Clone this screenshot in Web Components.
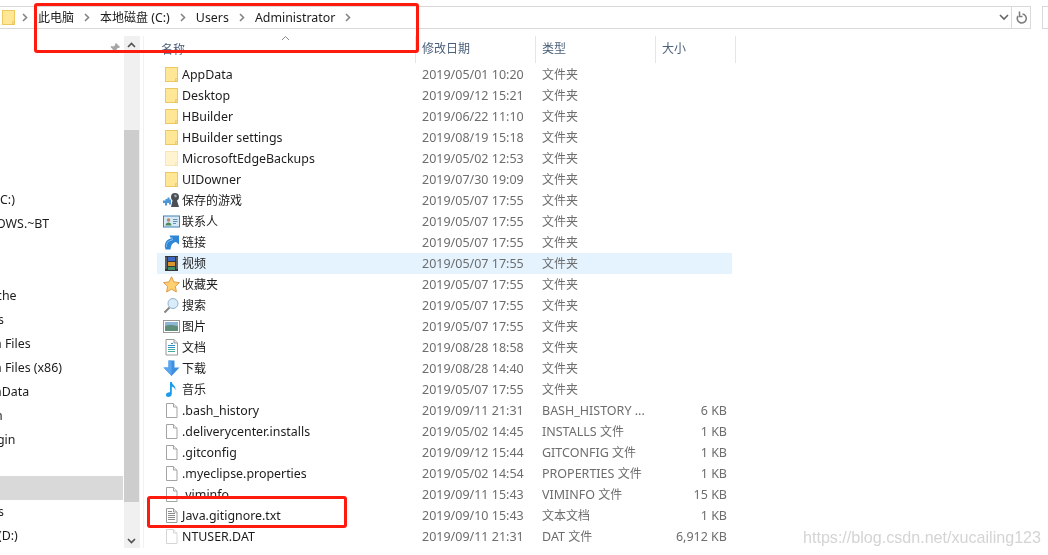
<!DOCTYPE html>
<html>
<head>
<meta charset="utf-8">
<title>Administrator</title>
<style>
  html, body { margin: 0; background: #fff; }
  body { font-family: "Noto Sans", "Noto Sans CJK SC", sans-serif; font-size: 12.4px; }
</style>
</head>
<body>
<explorer-window></explorer-window>

<script>
// chinese runs are a bit smaller than the latin next to them
const cjk = s => s.replace(/[\u4e00-\u9fff]+/g, m => `<span class="c">${m}</span>`);
const CJK_CSS = '.c { font-size: 12px; }';

const ICONS = {
  folder: `<rect x="2.5" y="1.5" width="12" height="14" fill="#ffe796" stroke="#ebc95f"/>
    <path d="M12.500 15.500v-3h2z" fill="#fff3c4" stroke="#e2bb55" stroke-width=".6"/>`,
  file: `<path d="M3.5 1.5h7l3.5 3.5v10.5H3.5z" fill="#fff" stroke="#a3a3a3"/>
    <path d="M10.5 1.5V5H14" fill="#f2f2f2" stroke="#a3a3a3"/>`,
  text: `<path d="M3.5 1.5h7l3.5 3.5v10.5H3.5z" fill="#fff" stroke="#9a9a9a"/>
    <path d="M10.5 1.5V5H14" fill="#eee" stroke="#9a9a9a"/>
    <path d="M5 6.5h7M5 8.5h7M5 10.5h7M5 12.5h7M5 4.5h4" stroke="#8c8c8c"/>`,
  games: `<path d="M0 8.500h2.500V7h2V5.500h2v2h1.500v5h-2V11H4v2.500H2V11H0z" fill="#4d97d8"/>
    <path d="M12 1a4 4 0 0 1 4 4c0 2-1 3-2 3.500l2 6.500H8l1.500-6.500C8.500 7.500 8 6.500 8 5a4 4 0 0 1 4-4z" fill="#4a4f55"/>
    <path d="M11 3l2-.5 1 2-2 1z" fill="#a4aab0"/>`,
  contact: `<rect x=".5" y="3" width="16" height="11" fill="#d8e8f5" stroke="#3f83b8"/>
    <circle cx="5.500" cy="7" r="1.800" fill="#b78a66"/>
    <path d="M2.500 12.500c0-2 1.500-3 3-3s3 1 3 3z" fill="#4f8a5b"/>
    <path d="M10 6.500h4.500M10 8.500h4.500M10 10.500h3" stroke="#5c93bd"/>`,
  link: `<path d="M2.500 15.500C.5 9.500 3.500 5.500 8 4.500L6.500 1.500H16v9l-3-2.500c-3 .5-5 2.500-5.500 7.500z" fill="#2f86d6"/>
    <path d="M3.500 13C3 9 5.500 6.500 9.500 6L8.500 3" fill="none" stroke="#7dbdf0"/>`,
  video: `<rect x="2" y="1" width="13" height="15" fill="#33363a"/>
    <path d="M3 2.500v12M14 2.500v12" stroke="#d8d8d8" stroke-dasharray="1 1"/>
    <rect x="5" y="2" width="7" height="4" fill="#3a68c4"/>
    <rect x="5" y="7" width="7" height="4" fill="#d9952e"/>
    <rect x="5" y="12" width="7" height="3" fill="#3f8f62"/>`,
  star: `<path d="M8.500.8l2.400 5.100 5.500.7-4 3.800 1 5.500-4.900-2.700-4.900 2.700 1-5.500-4-3.800 5.500-.7z" fill="#ffcf70" stroke="#dc9c48"/>`,
  search: `<circle cx="10" cy="6.500" r="5" fill="#d9ecfa" stroke="#8fb2cd"/>
    <path d="M6.500 10.500 1.500 15.500" stroke="#858585" stroke-width="2"/>`,
  picture: `<rect x=".5" y="2.500" width="16" height="12" fill="#fff" stroke="#9a9a9a"/>
    <rect x="2" y="4" width="13" height="5" fill="#8cb5d6"/>
    <path d="M2 8c4-1.500 9-1 13 .5V13H2z" fill="#5f8f7a"/>`,
  doc: `<path d="M3 .5h8l3.500 3.500v12H3z" fill="#fff" stroke="#9a9a9a"/>
    <path d="M11 .5V4h3.500" fill="#e8e8e8" stroke="#9a9a9a"/>
    <path d="M8 4.500h2M5 6.500h7M5 8.500h7" stroke="#2d8fc9"/>
    <path d="M5 10.500h7M5 12.500h7" stroke="#45ad9b"/>`,
  download: `<path d="M5.500.5h6v7h5l-8 8.500-8-8.500h5z" fill="#3f8fe0"/>
    <path d="M5.500.5h3v15l-8-8h5z" fill="#5aa6ee"/>`,
  music: `<path d="M7 1h1.800c.4 3 4.700 4 3.500 8.500C12 6.500 10 6 8.800 5.500V13c0 1.800-1.800 3-3.500 3S2.800 15 3 13.500 5 11 7 11.300z" fill="#1d9be8"/>`
};

class FileIcon extends HTMLElement {
  connectedCallback() {
    const kind = this.getAttribute('kind') || 'file';
    this.attachShadow({mode: 'open'}).innerHTML = `
      <style>
        :host { display: block; width: 17px; height: 17px; flex: none; }
        :host([faded]) { opacity: .45; }
        svg { display: block; }
      </style>
      <svg width="17" height="17" viewBox="0 0 17 17">${ICONS[kind]}</svg>`;
  }
}
customElements.define('file-icon', FileIcon);

class AddressBar extends HTMLElement {
  constructor() {
    super();
    const chev = '<svg class="chev" width="6" height="9" viewBox="0 0 6 9"><path d="M1 1l3.500 3.500L1 8" fill="none" stroke="#858585" stroke-width="1.600"/></svg>';
    const crumbs = ['此电脑', '本地磁盘 (C:)', 'Users', 'Administrator'];
    this.attachShadow({mode: 'open'}).innerHTML = `
      <style>
        :host { display: flex; height: 23px; margin-top: 6px; }
        .path { flex: 1; display: flex; align-items: center; gap: 10px; border: 1px solid #d9d9d9; border-left: 0; padding-bottom: 1px; color: #1c1c1c; }
        file-icon { margin-right: -5px; }
        .chev { flex: none; }
        .spacer { flex: 1; }
        .drop { margin-right: 2px; }
        .refresh { width: 18px; display: flex; align-items: center; justify-content: center; border: 1px solid #d9d9d9; border-left: 0; }
        .search { width: 5px; margin-left: 11px; border: 1px solid #d9d9d9; border-right: 0; }
        ${CJK_CSS}
      </style>
      <div class="path">
        <file-icon kind="folder"></file-icon>
        ${chev}
        ${crumbs.map(c => `<span>${cjk(c)}</span>${chev}`).join('')}
        <span class="spacer"></span>
        <svg class="drop" width="10" height="7" viewBox="0 0 10 7"><path d="M1 1l4 4 4-4" fill="none" stroke="#666" stroke-width="1.600"/></svg>
      </div>
      <div class="refresh">
        <svg width="13" height="14" viewBox="0 0 13 14"><path d="M7.500 3A4.500 4.500 0 1 1 3 5" fill="none" stroke="#7b7b7b" stroke-width="1.500"/><path d="M4.500.5v5h3" fill="none" stroke="#7b7b7b" stroke-width="1.500"/></svg>
      </div>
      <div class="search"></div>`;
  }
}
customElements.define('address-bar', AddressBar);

class NavPane extends HTMLElement {
  constructor() {
    super();
    // the pane is scrolled sideways, so most labels start cut off
    const items = [
      ['C:)', 0], ['OWS.~BT', -4], ['', 0], ['', 0], ['che', -4], ['s', -2],
      ['n Files', -6], ['n Files (x86)', -6], ['nData', -6], ['n', -5], ['gin', -3],
      ['', 0], ['', 0, true], ['s', -2], ['(D:)', -2]
    ];
    this.attachShadow({mode: 'open'}).innerHTML = `
      <style>
        :host { display: flex; flex-direction: column; width: 124px; overflow: hidden; color: #1c1c1c; }
        .pin { height: 152px; display: flex; justify-content: flex-end; padding: 6px 3px 0 0; box-sizing: border-box; flex: none; }
        .item { height: 24px; line-height: 23px; white-space: nowrap; flex: none; }
        .item.sel { background: #d9d9d9; margin-right: 1px; }
      </style>
      <div class="pin">
        <svg width="12" height="12" viewBox="0 0 12 12"><path d="M7 1l4 4-1 1-1-.2L7.500 7.500 8 9.500 7 10.500 4.500 8 1.500 11 1 10.500 4 7.500 1.500 5 2.500 4l2 .5L6.200 3 6 2z" fill="#a6a6a6"/></svg>
      </div>
      ${items.map(([t, off, sel]) => `<div class="item${sel ? ' sel' : ''}" style="margin-left:${off}px">${t}</div>`).join('')}`;
  }
}
customElements.define('nav-pane', NavPane);

class NavScroll extends HTMLElement {
  constructor() {
    super();
    this.attachShadow({mode: 'open'}).innerHTML = `
      <style>
        :host { display: flex; flex-direction: column; align-items: center; width: 16px; height: 512px; background: #f0f0f0; }
        .btn { height: 17px; display: flex; align-items: center; justify-content: center; flex: none; }
        .up { height: 94px; width: 100%; align-items: flex-start; padding: 6px 1px 0 0; box-sizing: border-box; }
        .thumb { width: 15px; height: 372px; background: #cdcdcd; flex: none; align-self: flex-start; }
        .down { flex: 1; width: 100%; align-items: flex-end; padding: 0 1px 4px 0; box-sizing: border-box; }
      </style>
      <div class="btn up"><svg width="9" height="6" viewBox="0 0 9 6"><path d="M1 5l3.500-3.500L8 5" fill="none" stroke="#505050" stroke-width="1.600"/></svg></div>
      <div class="thumb"></div>
      <div class="btn down"><svg width="9" height="6" viewBox="0 0 9 6"><path d="M1 1l3.500 3.500L8 1" fill="none" stroke="#505050" stroke-width="1.600"/></svg></div>`;
  }
}
customElements.define('nav-scroll', NavScroll);

class FileHeader extends HTMLElement {
  constructor() {
    super();
    this.attachShadow({mode: 'open'}).innerHTML = `
      <style>
        :host { display: grid; grid-template-columns: 259px 120px 120px 80px; height: 27px; margin-bottom: 1px; width: 579px; color: #4c607a; }
        .cell { border-right: 1px solid #e5e5e5; padding-left: 6px; line-height: 25px; box-sizing: border-box; }
        .name { display: flex; flex-direction: column; padding-left: 4px; line-height: 17px; }
        .name svg { align-self: center; flex: none; margin: -1px 5px 0 0; }
        ${CJK_CSS}
      </style>
      <div class="cell name">
        <svg width="9" height="6" viewBox="0 0 9 6"><path d="M1 5l3.500-3.500L8 5" fill="none" stroke="#8a8a8a"/></svg>
        <span>${cjk('名称')}</span>
      </div>
      <div class="cell">${cjk('修改日期')}</div>
      <div class="cell">${cjk('类型')}</div>
      <div class="cell">${cjk('大小')}</div>`;
  }
}
customElements.define('file-header', FileHeader);

class FileRow extends HTMLElement {
  connectedCallback() {
    const a = n => this.getAttribute(n) || '';
    this.attachShadow({mode: 'open'}).innerHTML = `
      <style>
        :host { display: grid; grid-template-columns: 259px 120px 120px 76px; width: 575px; height: 21px; line-height: 21px; color: #6d6d6d; white-space: nowrap; }
        :host([selected]) { background: #e5f3ff; }
        .name { display: flex; align-items: center; gap: 2px; padding-left: 6px; color: #1c1c1c; }
        .date, .type { padding-left: 6px; font-size: 12.5px; }
        .size { text-align: right; padding-right: 5px; font-size: 12.5px; }
        ${CJK_CSS}
      </style>
      <div class="name"><file-icon kind="${a('icon')}" ${this.hasAttribute('faded') ? 'faded' : ''}></file-icon><span>${cjk(a('name'))}</span></div>
      <div class="date">${a('date')}</div>
      <div class="type">${cjk(a('type'))}</div>
      <div class="size">${a('size')}</div>`;
  }
}
customElements.define('file-row', FileRow);

class RedMark extends HTMLElement {
  constructor() {
    super();
    this.attachShadow({mode: 'open'}).innerHTML = `
      <style>
        :host { position: absolute; display: block; box-sizing: border-box; border: 3px solid #ff1a0e; border-radius: 3px; }
      </style>`;
  }
}
customElements.define('red-mark', RedMark);

const FILES = [
  ['AppData', '2019/05/01 10:20', '文件夹', '', 'folder'],
  ['Desktop', '2019/09/12 15:21', '文件夹', '', 'folder'],
  ['HBuilder', '2019/06/22 11:10', '文件夹', '', 'folder'],
  ['HBuilder settings', '2019/08/19 15:18', '文件夹', '', 'folder'],
  ['MicrosoftEdgeBackups', '2019/05/02 12:53', '文件夹', '', 'folder', 'faded'],
  ['UIDowner', '2019/07/30 19:09', '文件夹', '', 'folder'],
  ['保存的游戏', '2019/05/07 17:55', '文件夹', '', 'games'],
  ['联系人', '2019/05/07 17:55', '文件夹', '', 'contact'],
  ['链接', '2019/05/07 17:55', '文件夹', '', 'link'],
  ['视频', '2019/05/07 17:55', '文件夹', '', 'video', 'selected'],
  ['收藏夹', '2019/05/07 17:55', '文件夹', '', 'star'],
  ['搜索', '2019/05/07 17:55', '文件夹', '', 'search'],
  ['图片', '2019/05/07 17:55', '文件夹', '', 'picture'],
  ['文档', '2019/08/28 18:58', '文件夹', '', 'doc'],
  ['下载', '2019/08/28 14:40', '文件夹', '', 'download'],
  ['音乐', '2019/05/07 17:55', '文件夹', '', 'music'],
  ['.bash_history', '2019/09/11 21:31', 'BASH_HISTORY ...', '6 KB', 'file'],
  ['.deliverycenter.installs', '2019/05/02 14:45', 'INSTALLS 文件', '1 KB', 'file'],
  ['.gitconfig', '2019/09/12 15:44', 'GITCONFIG 文件', '1 KB', 'file'],
  ['.myeclipse.properties', '2019/05/02 14:54', 'PROPERTIES 文件', '1 KB', 'file'],
  ['.viminfo', '2019/09/11 15:43', 'VIMINFO 文件', '15 KB', 'file'],
  ['Java.gitignore.txt', '2019/09/10 15:43', '文本文档', '1 KB', 'text'],
  ['NTUSER.DAT', '2019/09/11 21:31', 'DAT 文件', '6,912 KB', 'file', 'faded']
];

class ExplorerWindow extends HTMLElement {
  constructor() {
    super();
    const rows = FILES.map(([name, date, type, size, icon, flag]) =>
      `<file-row name="${name}" date="${date}" type="${type}" size="${size}" icon="${icon}" ${flag || ''}></file-row>`).join('');
    this.attachShadow({mode: 'open'}).innerHTML = `
      <style>
        :host { display: block; position: relative; width: 1048px; height: 555px; overflow: hidden; background: #fff; filter: blur(.3px); }
        .main { display: flex; margin-top: 7px; }
        .list { margin-left: 16px; }
        .rule { width: 1px; height: 512px; background: #f2f2f2; margin-left: 3px; margin-right: -3px; }
        .wm { position: absolute; left: 803px; top: 526px; font: 16.1px/22px "Liberation Sans", sans-serif; color: #d4d4d4; white-space: nowrap; }
      </style>
      <address-bar></address-bar>
      <div class="main">
        <nav-pane></nav-pane>
        <nav-scroll></nav-scroll>
        <div class="rule"></div>
        <div class="list">
          <file-header></file-header>
          ${rows}
        </div>
      </div>
      <red-mark style="left:34px;top:3px;width:385px;height:50px"></red-mark>
      <red-mark style="left:147px;top:496px;width:200px;height:32px"></red-mark>
      <div class="wm">https://blog.csdn.net/xucailing123</div>`;
  }
}
customElements.define('explorer-window', ExplorerWindow);
</script>
</body>
</html>
